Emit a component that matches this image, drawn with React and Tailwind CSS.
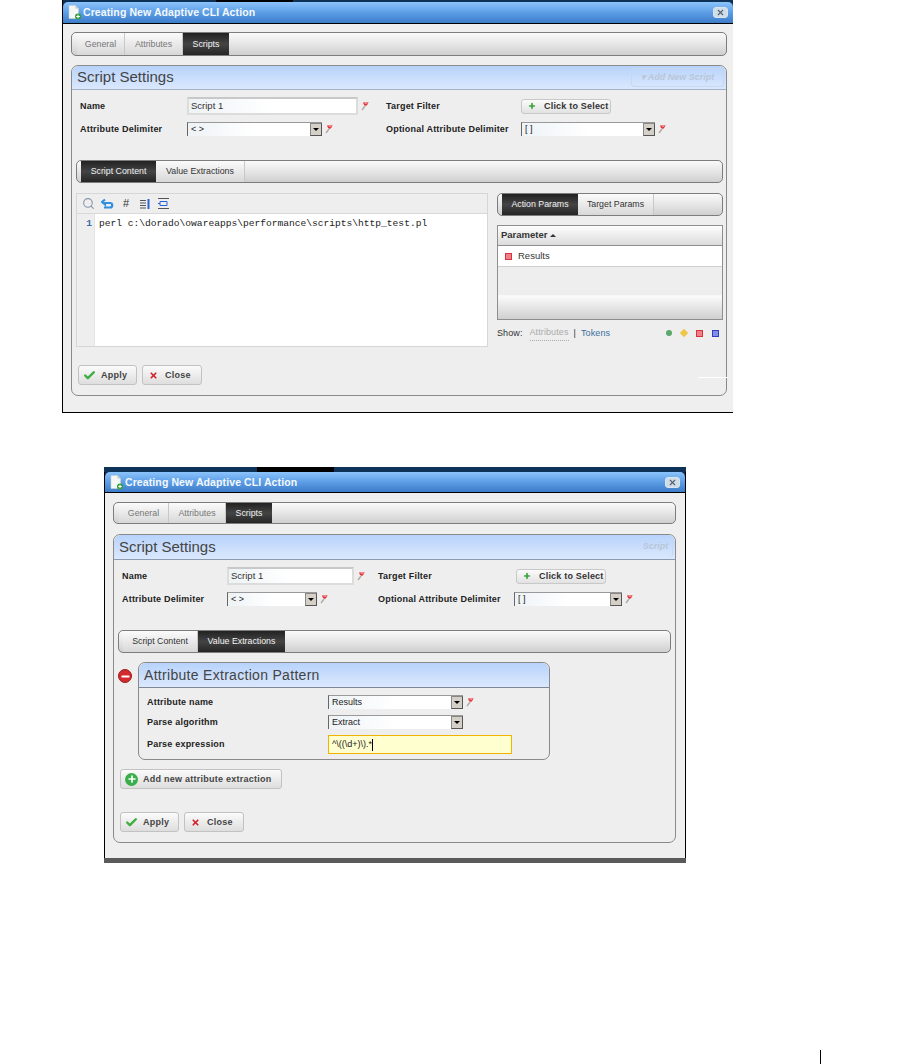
import { Check, X, Plus, Minus, Search } from 'lucide-react';

function Pin() {
  return (
    <svg width="10" height="10" viewBox="0 0 10 10" className="shrink-0">
      <path d="M3 1.5 L8.5 1 L7.5 3.5 L6 5 L4 4 Z" fill="#e0353a" />
      <path d="M4 1 L8 1 L7 3 L5 3 Z" fill="#f4878a" />
      <path d="M5 5 L2 9" stroke="#b5a9a0" strokeWidth="1.4" />
    </svg>
  );
}

function DocIcon() {
  return (
    <svg width="13" height="15" viewBox="0 0 13 15" className="shrink-0">
      <path d="M1 .5 H7.5 L10.5 3.5 V13.5 H1 Z" fill="#f4f7f4" stroke="#c9d4cf" strokeWidth=".6" />
      <path d="M7.5 .5 V3.5 H10.5 Z" fill="#b9c9c4" />
      <circle cx="10" cy="11.5" r="3" fill="#2f9e3a" />
      <path d="M8.2 11.5 H11.8 M10 9.7 V13.3" stroke="#fff" strokeWidth="1.1" />
    </svg>
  );
}

function SquareDot({ color, inner }) {
  return (
    <span className="w-[7px] h-[7px] border flex items-center justify-center" style={{ borderColor: color, background: inner }} />
  );
}

function TabBar({ className, pad, tabs, active }) {
  return (
    <div className={`flex border border-[#7d7d7d] rounded-[5px] bg-linear-to-b from-[#fafafa] via-[#e6e6e6] to-[#cfcfcf] overflow-hidden ${className}`} style={{ paddingLeft: pad }}>
      {tabs.map((t, i) => (
        <div
          key={t.label}
          style={{ width: t.width }}
          className={i === active
            ? 'flex items-center justify-center pt-[1px] text-[#f2f2f2] text-[8.8px] bg-linear-to-b from-[#222] via-[#444] to-[#262626]'
            : `flex items-center justify-center pt-[1px] border-r border-[#c8c8c8] text-[8.8px] bg-linear-to-b from-[#fbfbfb] to-[#d8d8d8] ${t.dim ? 'text-[#777]' : 'text-[#333]'}`}
        >
          {t.label}
        </div>
      ))}
    </div>
  );
}

function Select({ width, value, height = 'h-[14px]' }) {
  return (
    <div style={{ width }} className={`flex ${height} border-l border-t border-l-[#666] border-t-[#999] bg-linear-to-r from-[#eef3f6] via-white to-white`}>
      <span className="flex-1 pl-[3px] text-[9px] leading-[13px] text-[#222]">{value}</span>
      <span className="w-[12px] bg-[#d4d0c8] border border-[#888] border-r-[#555] border-b-[#555] flex items-center justify-center">
        <span className="w-0 h-0 border-x-[3px] border-x-transparent border-t-[3px] border-t-black" />
      </span>
    </div>
  );
}

function Button({ width, icon, label, gap = 'gap-[9px]', pl = 'pl-[4px]' }) {
  return (
    <div style={{ width }} className={`h-[20px] flex items-center ${gap} ${pl} rounded-[3px] border border-[#c2c2c2] bg-linear-to-b from-[#fbfbfb] to-[#dedede] text-[9px] font-bold tracking-[.25px] whitespace-nowrap text-[#444]`}>
      {icon}
      <span className="translate-y-[1px]">{label}</span>
    </div>
  );
}

function ApplyClose({ closeMargin }) {
  return (
    <div className={`flex ${closeMargin}`}>
      <Button width="59px" label="Apply" gap="gap-[5px]" icon={<Check size={13} strokeWidth={4.5} className="text-[#3fae3f]" />} />
      <div className="w-[5px]" />
      <Button width="60px" label="Close" pl="pl-[6px]" gap="gap-[7px]" icon={<X size={9} strokeWidth={4.5} className="text-[#d2242c]" />} />
    </div>
  );
}

function SelectBtn({ width, className = '' }) {
  return (
    <div style={{ width }} className={`h-[15px] flex items-center gap-[8px] pl-[6px] rounded-[3px] border border-[#c8c8c8] bg-linear-to-b from-[#fbfbfb] to-[#e2e2e2] text-[9px] font-bold tracking-[.2px] whitespace-nowrap text-[#333] ${className}`}>
      <Plus size={8} strokeWidth={5} className="text-[#3aa33a]" />
      <span className="translate-y-[1px]">Click to Select</span>
    </div>
  );
}

function Toolbar() {
  return (
    <div className="h-[20px] flex items-center gap-[6px] pl-[5px] border-b border-[#d8d8d8]">
      <Search size={13} strokeWidth={2} className="text-[#8796a8]" />
      <svg width="14" height="12" viewBox="0 0 14 12">
        <path d="M4 1.5 L1 4 L4 6.5 V5 H9 A2 2 0 0 1 9 9.5 H3" fill="none" stroke="#2f8fe0" strokeWidth="2.2" />
      </svg>
      <span className="w-[8px] text-[11px] leading-none text-[#333] ml-[2px]">#</span>
      <svg width="11" height="10" viewBox="0 0 11 10" className="ml-[3px]">
        <path d="M0 1.5 H6 M0 4 H6 M0 6.5 H6 M0 9 H6" stroke="#555" />
        <path d="M8.5 0 V10" stroke="#2c62d8" strokeWidth="2" />
      </svg>
      <svg width="11" height="11" viewBox="0 0 11 11" className="ml-[1px]">
        <path d="M0 .5 H11 M0 10.5 H11" stroke="#555" />
        <path d="M2 3.5 H9 V7.5 H2 Z M0 5.5 H2" fill="none" stroke="#2c62d8" />
      </svg>
    </div>
  );
}

function TopForm({ columns, inputWidth, sel1, sel2, btnWidth, btnClass }) {
  return (
    <div style={{ gridTemplateColumns: columns }} className="grid gap-y-[7px] pl-[8px] pt-[7px] items-center">
      <span className="translate-y-[1px] text-[9px] font-bold tracking-[.2px] text-[#222]">Name</span>
      <div className="flex items-center gap-[2px]">
        <div style={{ width: inputWidth }} className="h-[18px] border-2 border-[#dcdcdc] border-t-[#c8c8c8] bg-linear-to-r from-[#eef3f6] via-white to-white pl-[2px] text-[9.5px] leading-[14px] text-[#333]">Script 1</div>
        <Pin />
      </div>
      <span className="translate-y-[1px] text-[9px] font-bold tracking-[.2px] text-[#222]">Target Filter</span>
      <SelectBtn width={btnWidth} className={btnClass} />
      <span className="translate-y-[1px] text-[9px] font-bold tracking-[.2px] text-[#222]">Attribute Delimiter</span>
      <div className="flex items-center gap-[2px]">
        <Select width={sel1} value="< >" />
        <Pin />
      </div>
      <span className="translate-y-[1px] text-[9px] font-bold tracking-[.2px] text-[#222] whitespace-nowrap">Optional Attribute Delimiter</span>
      <div className="flex items-center gap-[2px]">
        <Select width={sel2} value="[ ]" />
        <Pin />
      </div>
    </div>
  );
}

function TitleBar({ height }) {
  return (
    <div className="bg-[#0e3158]">
      <div className={`${height} flex items-center justify-between pl-[5px] pr-[5px] rounded-t-[5px] border-b border-black bg-linear-to-b from-[#8cc3fb] via-[#5c9ee6] to-[#3d7cc9]`}>
        <div className="flex items-center gap-[2px]">
          <DocIcon />
          <span className="text-[10.5px] font-bold tracking-[.1px] pt-[1px] text-[#f4f8fc]">Creating New Adaptive CLI Action</span>
        </div>
        <span className="w-[15px] h-[11px] rounded-[3px] border border-[#d8e4ee] bg-[#cfdde9] flex items-center justify-center">
          <X size={9} strokeWidth={3} className="text-[#54606c]" />
        </span>
      </div>
    </div>
  );
}

function FirstDialog() {
  return (
    <div className="relative ml-[62px] w-[671px] h-[413px] flex flex-col border-l border-b border-black bg-[#efefef]">
      <div className="h-[2px] flex bg-[#0e3158]">
        <div className="w-[153px]" />
        <div className="w-[77px] bg-black" />
      </div>
      <TitleBar height="h-[22px]" />
      <div className="pl-[8px] pt-[8px]">
        <TabBar
          className="w-[656px] h-[24px]"
          pad={5}
          active={2}
          tabs={[
            { label: 'General', width: 48, dim: true },
            { label: 'Attributes', width: 58, dim: true },
            { label: 'Scripts', width: 46 },
          ]}
        />
        <div className="relative mt-[9px] w-[656px] h-[331px] border border-[#8a8a8a] rounded-[7px] bg-[#eeeeee]">
          <div className="h-[24px] flex items-center justify-between pl-[5px] pr-[2px] rounded-t-[7px] border-b border-[#9fb2c9] bg-linear-to-b from-[#b7d3fb] to-[#dbe8fd]">
            <span className="text-[15px] text-[#444]">Script Settings</span>
            <span className="w-[93px] h-[19px] flex items-center justify-center rounded-[3px] border border-[#c6d7ee] text-[9px] italic font-bold text-[#b9c6d8]">▾ Add New Script</span>
          </div>
          <TopForm columns="107px 199px 135px 1fr" inputWidth="171px" sel1="135px" sel2="134px" btnWidth="90px" />
          <div className="pl-[4px] pt-[24px]">
            <TabBar
              className="w-[647px] h-[23px]"
              pad={4}
              active={0}
              tabs={[
                { label: 'Script Content', width: 75 },
                { label: 'Value Extractions', width: 89 },
              ]}
            />
            <div className="flex mt-[10px]">
              <div className="w-[412px] h-[154px] border border-[#d6d6d6] flex flex-col">
                <Toolbar />
                <div className="flex flex-1">
                  <div className="w-[18px] bg-[#eeeeee] border-r border-[#e4e4e4] text-right pr-[2px] pt-[5px] text-[9.6px] leading-[10px] font-bold text-[#3a6ea8] [font-family:'Liberation_Mono',monospace]">1</div>
                  <div className="flex-1 bg-white pl-[4px] pt-[5px] text-[9.6px] leading-[10px] text-[#222] [font-family:'Liberation_Mono',monospace]">{'perl c:\\dorado\\owareapps\\performance\\scripts\\http_test.pl'}</div>
                </div>
              </div>
              <div className="ml-[9px] w-[226px]">
                <TabBar
                  className="w-[226px] h-[23px]"
                  pad={4}
                  active={0}
                  tabs={[
                    { label: 'Action Params', width: 76 },
                    { label: 'Target Params', width: 76 },
                  ]}
                />
                <div className="mt-[9px] h-[95px] border border-[#8f8f8f] flex flex-col">
                  <div className="h-[20px] flex items-center gap-[3px] pl-[3px] border-b border-[#8f8f8f] bg-linear-to-b from-[#fdfdfd] to-[#dcdcdc] text-[9.5px] font-bold text-[#333]">
                    Parameter
                    <span className="w-0 h-0 border-x-[3px] border-x-transparent border-b-[3px] border-b-[#333]" />
                  </div>
                  <div className="h-[21px] flex items-center gap-[6px] pl-[7px] bg-white border-b border-[#cfcfcf] text-[9.5px] text-[#333]">
                    <SquareDot color="#d8323a" inner="#f08088" />
                    Results
                  </div>
                  <div className="flex-1 border-b border-[#f8f8f8]" />
                  <div className="h-[23px] bg-linear-to-b from-[#fbfbfb] to-[#d0d0d0]" />
                </div>
                <div className="mt-[6px] flex items-center text-[9px] tracking-[.1px] text-[#333]">
                  <span>Show:</span>
                  <span className="ml-[7px] text-[#aaa] border-b border-dotted border-[#aaa]">Attributes</span>
                  <span className="mx-[5px]">|</span>
                  <span className="text-[#3b6fa0]">Tokens</span>
                  <span className="ml-auto flex items-center gap-[9px] pr-[4px]">
                    <span className="w-[6px] h-[6px] rounded-full bg-[#5aa86a]" />
                    <span className="w-[6px] h-[6px] rotate-45 bg-[#eec64a]" />
                    <SquareDot color="#d8323a" inner="#f08088" />
                    <SquareDot color="#3040c0" inner="#8090e8" />
                  </span>
                </div>
              </div>
            </div>
          </div>
          <ApplyClose closeMargin="ml-[6px] mt-[18px]" />
          <div className="absolute right-[-2px] top-[311px] w-[30px] h-px bg-white" />
        </div>
      </div>
    </div>
  );
}

function SecondDialog() {
  return (
    <div className="ml-[104px] w-[582px] h-[396px] flex flex-col">
      <div className="h-[5px] flex bg-[#0e3158]">
        <div className="w-[153px]" />
        <div className="w-[77px] bg-black" />
      </div>
      <div className="flex-1 flex flex-col border-x border-black bg-[#efefef]">
        <TitleBar height="h-[21px]" />
        <div className="pl-[8px] pt-[9px]">
          <TabBar
            className="w-[563px] h-[22px]"
            pad={5}
            active={2}
            tabs={[
              { label: 'General', width: 50, dim: true },
              { label: 'Attributes', width: 57, dim: true },
              { label: 'Scripts', width: 46 },
            ]}
          />
          <div className="mt-[10px] w-[563px] h-[309px] border border-[#8a8a8a] rounded-[7px] bg-[#eeeeee]">
            <div className="h-[25px] flex items-center justify-between pl-[5px] pr-[2px] rounded-t-[7px] border-b border-[#8a9ab0] bg-linear-to-b from-[#b7d3fb] to-[#dbe8fd]">
              <span className="text-[15px] text-[#444]">Script Settings</span>
              <span className="w-[34px] h-[19px] flex items-center justify-center rounded-r-[3px] border-r border-[#c6d7ee] text-[9px] italic font-bold text-[#b9c6d8]">Script</span>
            </div>
            <TopForm columns="105px 151px 136px 1fr" inputWidth="127px" sel1="90px" sel2="108px" btnWidth="90px" btnClass="ml-[2px]" />
            <div className="pl-[4px] pt-[24px]">
              <TabBar
                className="w-[553px] h-[23px]"
                pad={4}
                active={1}
                tabs={[
                  { label: 'Script Content', width: 75 },
                  { label: 'Value Extractions', width: 87 },
                ]}
              />
            </div>
            <div className="flex items-center pl-[4px] pt-[9px]">
              <span className="w-[14px] h-[14px] rounded-full bg-[#d42a2e] border border-[#9a1c1c] flex items-center justify-center self-start mt-[7px]">
                <Minus size={11} strokeWidth={4} className="text-white" />
              </span>
              <div className="ml-[6px] w-[412px] h-[98px] border border-[#8a8a8a] rounded-[7px]">
                <div className="h-[25px] flex items-center pl-[5px] rounded-t-[7px] border-b border-[#7e8796] bg-linear-to-b from-[#b7d3fb] to-[#dbe8fd] text-[14px] tracking-[.3px] text-[#444]">Attribute Extraction Pattern</div>
                <div style={{ gridTemplateColumns: '181px 1fr' }} className="grid pl-[8px] pt-[7px] gap-y-[6px] items-center">
                  <span className="translate-y-[1px] text-[9px] font-bold tracking-[.2px] text-[#222]">Attribute name</span>
                  <div className="flex items-center gap-[2px]">
                    <Select width="135px" value="Results" />
                    <Pin />
                  </div>
                  <span className="translate-y-[1px] text-[9px] font-bold tracking-[.2px] text-[#222]">Parse algorithm</span>
                  <Select width="135px" value="Extract" />
                  <span className="text-[9px] font-bold tracking-[.2px] text-[#222]">Parse expression</span>
                  <div className="w-[184px] h-[19px] border border-[#f0b400] bg-[#ffffd0] flex items-center pl-[3px] text-[9px] text-[#222]">
                    {'^\\((\\d+)\\).*'}
                    <span className="w-px h-[12px] bg-black" />
                  </div>
                </div>
              </div>
            </div>
            <div className="pl-[6px] pt-[9px]">
              <Button width="162px" label="Add new attribute extraction" gap="gap-[5px]" pl="pl-[4px]" icon={
                <span className="w-[13px] h-[13px] rounded-full bg-[#3aae4a] flex items-center justify-center">
                  <Plus size={10} strokeWidth={4} className="text-white" />
                </span>
              } />
            </div>
            <ApplyClose closeMargin="ml-[6px] mt-[23px]" />
          </div>
        </div>
      </div>
      <div className="h-[5px] bg-[#5a5a5a]" />
    </div>
  );
}

export default function App() {
  return (
    <div className="h-[1064px] overflow-hidden bg-white [font-family:'Liberation_Sans',sans-serif]">
      <FirstDialog />
      <div className="h-[54px]" />
      <SecondDialog />
      <div className="ml-[820px] mt-[187px] w-px h-[14px] bg-black" />
    </div>
  );
}
